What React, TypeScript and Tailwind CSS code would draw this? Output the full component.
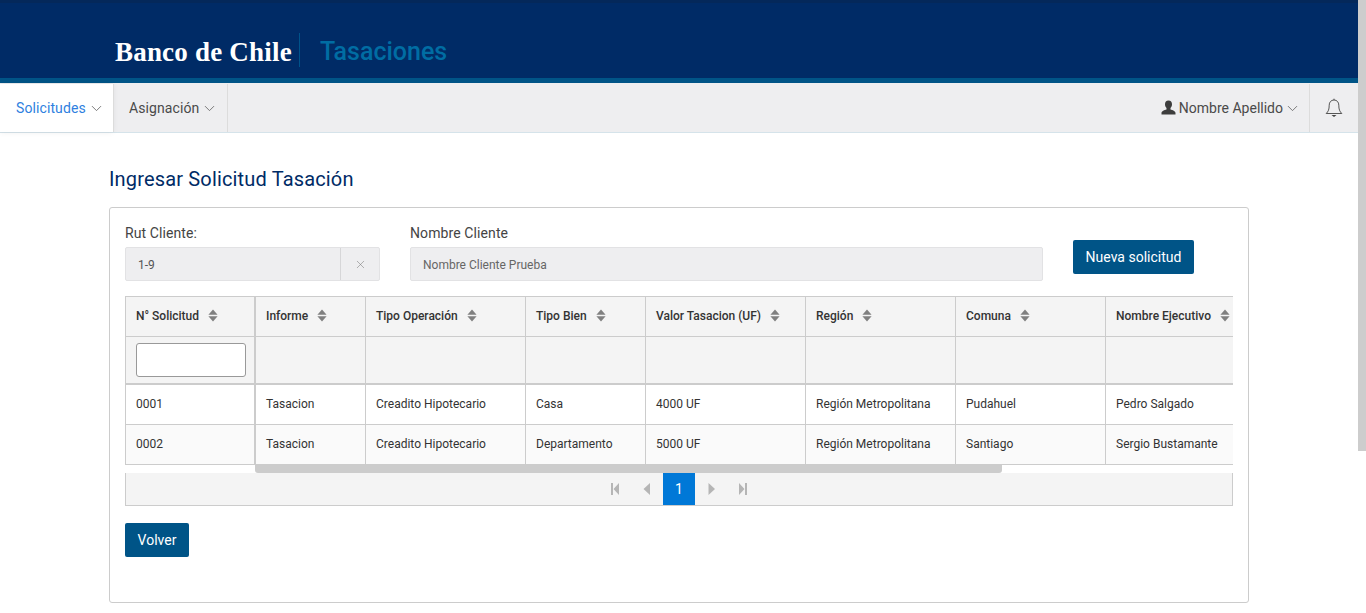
import React from 'react';
import { ChevronDown, X } from 'lucide-react';

const COLUMNS = [
  { label: 'Informe', width: 'w-[109px]' },
  { label: 'Tipo Operación', width: 'w-[160px]' },
  { label: 'Tipo Bien', width: 'w-[120px]' },
  { label: 'Valor Tasacion (UF)', width: 'w-[160px]' },
  { label: 'Región', width: 'w-[150px]' },
  { label: 'Comuna', width: 'w-[150px]' },
  { label: 'Nombre Ejecutivo', width: 'w-[150px]' },
];

const ROWS = [
  { id: '0001', cells: ['Tasacion', 'Creadito Hipotecario', 'Casa', '4000 UF', 'Región Metropolitana', 'Pudahuel', 'Pedro Salgado'] },
  { id: '0002', cells: ['Tasacion', 'Creadito Hipotecario', 'Departamento', '5000 UF', 'Región Metropolitana', 'Santiago', 'Sergio Bustamante'] },
];

const SortIcon = () => (
  <svg width="10" height="13" viewBox="0 0 10 13" className="ml-[9px] shrink-0">
    <path d="M5 0.500 L9.600 5.800 H0.400 Z" fill="#808080" />
    <path d="M0.400 7.200 H9.600 L5 12.500 Z" fill="#808080" />
  </svg>
);

const PagerIcon = ({ d }: { d: string }) => (
  <svg width="10" height="12" viewBox="0 0 10 12" className="shrink-0">
    <path d={d} fill="#b5b5b5" />
  </svg>
);

const App: React.FC = () => {
  return (
    <div className="relative h-[613px] overflow-hidden bg-white font-['Roboto',sans-serif] text-[14px] text-[#333]">
      {/* page scrollbar */}
      <div className="absolute right-0 top-0 z-10 h-[451px] w-2 bg-[#cdcdcd]" />

      <header className="h-[83px] border-t-[3px] border-b-[5px] border-t-[#04285a] border-b-[#005487] bg-[#002b66] pl-[115px] pt-[30px]">
        <div className="flex h-[34px] items-center">
          <span className="w-[184px] whitespace-nowrap pt-[5px] font-['Liberation_Serif',serif] text-[27px] font-bold leading-none tracking-[0.2px] text-white">
            Banco de Chile
          </span>
          <div className="h-[34px] w-px bg-[#00538a]" />
          <span className="ml-5 pt-[3px] text-[25px] font-medium leading-none text-[#006da3]">Tasaciones</span>
        </div>
      </header>

      <nav className="flex h-[50px] items-stretch border-b border-[#d5e3ea] bg-[#eeeef0] pt-px">
        <div className="flex w-[113px] items-center bg-white pl-4 tracking-[0.1px] text-[#2f7fe0] shadow-[0_0_6px_rgba(0,0,0,0.08)]">
          Solicitudes
          <ChevronDown size={17} strokeWidth={1.2} className="ml-[2px] text-[#666]" />
        </div>
        <div className="flex w-[115px] items-center border-x border-[#dcdcdc] pl-[15px] tracking-[0.1px] text-[#4a4a4a]">
          Asignación
          <ChevronDown size={17} strokeWidth={1.2} className="ml-[2px] text-[#666]" />
        </div>
        <div className="ml-auto flex items-center pr-[8px] text-[#4a4a4a]">
          <svg width="15" height="15" viewBox="0 0 15 15" className="mb-[2px] mr-[3px]">
            <path d="M7.500 0.500c2.300 0 3.500 1.700 3.500 3.800 0 1.600-.7 3-1.500 3.800v1.400c2 .7 5 1.400 5 3.500v1.500H.5V13c0-2.100 3-2.800 5-3.500V8.100C4.700 7.300 4 5.900 4 4.300 4 2.200 5.200.5 7.500.5z" fill="#3d3d3d" />
          </svg>
          Nombre Apellido
          <ChevronDown size={17} strokeWidth={1.2} className="ml-[1px] text-[#666]" />
        </div>
        <div className="mr-2 flex w-[49px] items-center justify-center border-l border-[#dcdcdc]">
          <svg width="18" height="20" viewBox="0 0 18 20" fill="none">
            <path d="M9 2c-3 0-4.800 2.300-4.800 5.200 0 4.300-.9 6.300-3 8.300h15.600c-2.100-2-3-4-3-8.300C13.800 4.300 12 2 9 2z" stroke="#444" strokeWidth="0.9" />
            <path d="M9 0.700v1.300" stroke="#444" strokeWidth="0.9" />
            <path d="M6.500 17h5L9 19z" fill="#444" />
          </svg>
        </div>
      </nav>

      <main className="px-[109px]">
        <h1 className="mt-[34px] h-[24px] w-[600px] text-[20px] leading-[24px] tracking-[0.16px] text-[#002b66]">
          Ingresar Solicitud Tasación
        </h1>

        <section className="mt-[16px] h-[396px] w-[1140px] rounded-[3px] border border-[#cccccc] px-[15px] pt-4">
          <div className="flex items-start">
            <div className="w-[255px]">
              <label className="block h-[23px] leading-[18px] tracking-[0.1px] text-[#444]">Rut Cliente:</label>
              <div className="flex h-[34px] rounded-[2px] border border-[#e2e2e4] bg-[#eeeef0] pt-px text-[12px] text-[#555]">
                <span className="flex flex-1 items-center pl-3">1-9</span>
                <span className="-mt-px flex w-[39px] items-center justify-center border-l border-[#d6d6d8]">
                  <X size={13} strokeWidth={1} className="text-[#777]" />
                </span>
              </div>
            </div>
            <div className="ml-[30px] w-[633px]">
              <label className="block h-[23px] leading-[18px] tracking-[0.1px] text-[#444]">Nombre Cliente</label>
              <div className="flex h-[34px] items-center rounded-[2px] border border-[#e2e2e4] bg-[#eeeef0] pl-3 pt-px text-[12px] text-[#666]">
                Nombre Cliente Prueba
              </div>
            </div>
            <button className="ml-[30px] mt-[16px] h-[34px] w-[121px] rounded-[2px] bg-[#005487] text-center text-white">
              Nueva solicitud
            </button>
          </div>

          {/* tabla */}
          <div className="mt-[15px] flex w-[1108px] overflow-hidden text-[12px] text-[#333]">
            <div className="w-[131px] shrink-0 border-x border-r-[2px] border-[#cccccc]">
              <div className="flex h-[41px] items-center border-y border-[#cccccc] bg-[#f4f4f4] pb-[2px] pl-[10px] font-medium">
                N° Solicitud
                <SortIcon />
              </div>
              <div className="flex h-[46px] items-center bg-[#f4f4f4] pl-[10px]">
                <div className="h-[34px] w-[110px] rounded-[3px] border border-[#999] bg-white" />
              </div>
              {ROWS.map((row, i) => (
                <div
                  key={row.id}
                  className={`flex h-[41px] items-center pb-[2px] pl-[10px] ${i === 0 ? 'border-t-[2px] border-[#cccccc] bg-white' : 'border-y border-[#cccccc] bg-[#fafafa]'}`}
                >
                  {row.id}
                </div>
              ))}
            </div>
            <div className="flex shrink-0">
              {COLUMNS.map((col, c) => (
                <div key={col.label} className={`${col.width} shrink-0 ${c > 0 ? 'border-l border-[#cccccc]' : ''}`}>
                  <div className="flex h-[41px] items-center whitespace-nowrap border-y border-[#cccccc] bg-[#f4f4f4] pb-[2px] pl-[10px] font-medium">
                    {col.label}
                    <SortIcon />
                  </div>
                  <div className="h-[46px] bg-[#f4f4f4]" />
                  {ROWS.map((row, i) => (
                    <div
                      key={row.id}
                      className={`flex h-[41px] items-center whitespace-nowrap pb-[2px] pl-[10px] ${i === 0 ? 'border-t-[2px] border-[#cccccc] bg-white' : 'border-y border-[#cccccc] bg-[#fafafa]'}`}
                    >
                      {row.cells[c]}
                    </div>
                  ))}
                </div>
              ))}
            </div>
          </div>

          {/* scroll horizontal de la tabla */}
          <div className="h-2 w-[1108px] pl-[130px]">
            <div className="h-2 w-[747px] rounded-b-[3px] bg-[#cccccc]" />
          </div>

          <div className="flex h-[33px] w-[1108px] items-center justify-center border-x border-b border-[#cccccc] bg-[#f4f4f4]">
            <span className="flex w-[32px] justify-center"><PagerIcon d="M1 0h2v12H1zM9 0v12L3.500 6z" /></span>
            <span className="flex w-[32px] justify-center"><PagerIcon d="M8 0v12L1.500 6z" /></span>
            <span className="flex h-[32px] w-[32px] items-center justify-center bg-[#0078d7] text-[14px] text-white">1</span>
            <span className="flex w-[32px] justify-center"><PagerIcon d="M2.500 0v12l6.500-6z" /></span>
            <span className="flex w-[32px] justify-center"><PagerIcon d="M1 0v12l5.500-6zM7 0h2v12H7z" /></span>
          </div>

          <button className="mt-[17px] h-[34px] w-[64px] rounded-[2px] bg-[#005487] text-center text-white">Volver</button>
        </section>
      </main>
    </div>
  );
};

export default App;
